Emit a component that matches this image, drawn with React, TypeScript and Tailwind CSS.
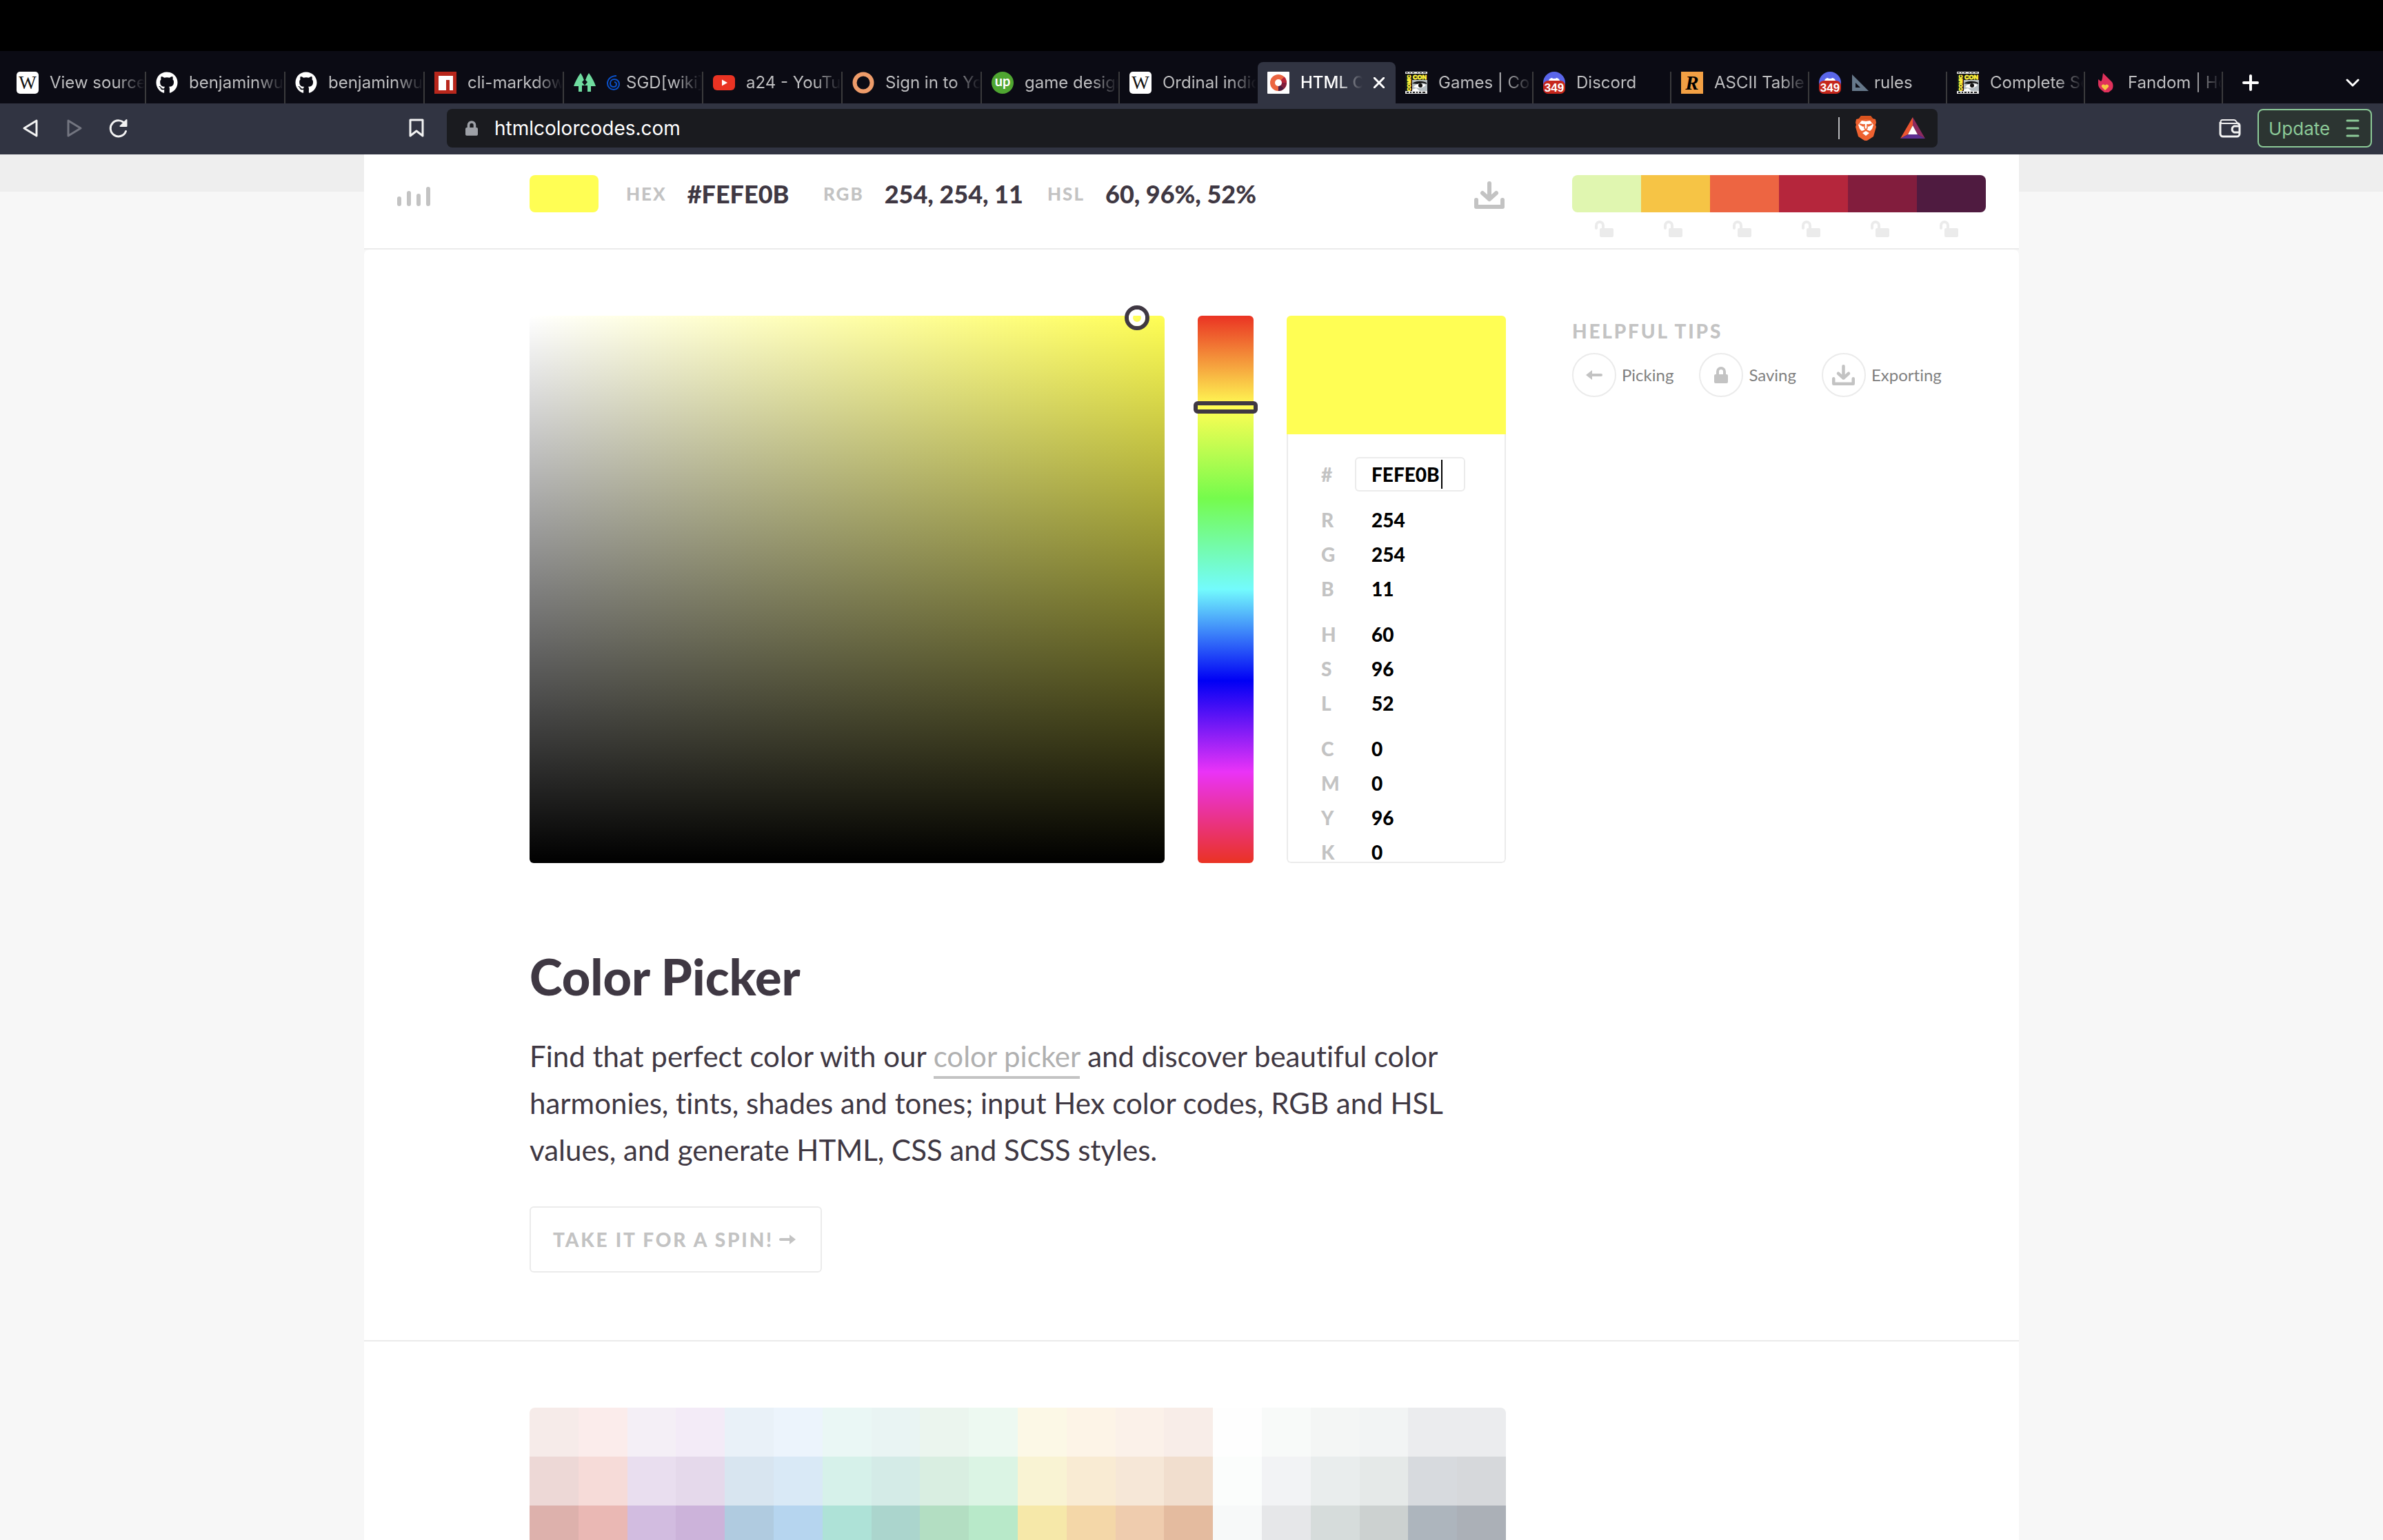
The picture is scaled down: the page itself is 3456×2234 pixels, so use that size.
import React from "react";
import { FaGithub } from "react-icons/fa";

const Wiki = () => (
  <svg viewBox="0 0 32 32" className="size-8">
    <rect width="32" height="32" rx="5" fill="#fff" />
    <text x="16" y="25" textAnchor="middle" fontSize="27" fontFamily="Liberation Serif, serif" fill="#111">W</text>
  </svg>
);
const Npm = () => (
  <svg viewBox="0 0 32 32" className="size-8">
    <rect width="32" height="32" fill="#b8271c" />
    <path d="M6 6h21v21h-5V12h-5v15H6z" fill="#fff" />
  </svg>
);
const Trees = () => (
  <svg viewBox="0 0 32 32" className="size-8">
    <path d="M10 2c3 4 4 8 5 10l-3 3 4 5h-4v9H7v-8H0c2-6 5-12 10-19zM22 2c5 7 8 13 10 19h-7v8h-5v-9h-4l4-5-3-3c1-2 2-6 5-10z" fill="#6fdc9f" />
  </svg>
);
const YouTube = () => (
  <svg viewBox="0 0 32 32" className="size-8">
    <rect y="5" width="32" height="22" rx="6" fill="#ea3323" />
    <path d="M13 11.500v9l8-4.500z" fill="#fff" />
  </svg>
);
const Ring = () => (
  <svg viewBox="0 0 32 32" className="size-8">
    <circle cx="16" cy="16" r="12.500" fill="none" stroke="#ee9c6a" strokeWidth="6" />
  </svg>
);
const Upwork = () => (
  <svg viewBox="0 0 32 32" className="size-8">
    <circle cx="16" cy="16" r="16" fill="#4fa631" />
    <text x="16" y="21" textAnchor="middle" fontSize="20" fontWeight="700" fontFamily="Lato, sans-serif" fill="#fff">up</text>
  </svg>
);
const ColorWheel = () => (
  <svg viewBox="0 0 32 32" className="size-8">
    <rect width="32" height="32" rx="1" fill="#fff" />
    <circle cx="16" cy="16" r="12" fill="#eb6541" />
    <path d="M16 16 24.500 7.500A12 12 0 0 1 28 16z" fill="#b5263b" />
    <path d="M16 16h12a12 12 0 0 1-3.500 8.500z" fill="#821d3d" />
    <path d="M16 16l8.500 8.500A12 12 0 0 1 16 28z" fill="#4f1b40" />
    <circle cx="16" cy="16" r="5" fill="#fff" />
  </svg>
);
const ComicCon = () => (
  <svg viewBox="0 0 32 32" className="size-8">
    <rect width="32" height="32" fill="#b4bcc0" />
    <path d="M0 0h32v3H0z" fill="#e8e8e8" />
    <path d="M1 1h3v1H1zM6 1h2v1H6zM10 1h3v1h-3zM17 1h2v1h-2zM21 1h3v1h-3zM26 1h4v1h-4z" fill="#222" />
    <path d="M0 3h32v9H10v16H0z" fill="#151515" />
    <text x="21" y="11" textAnchor="middle" fontSize="9" fontWeight="700" fontFamily="Liberation Sans, sans-serif" fill="#fff23a" stroke="#fff23a" strokeWidth="0.800">CON</text>
    <text transform="translate(8 28) rotate(-90)" fontSize="7" fontWeight="700" fontFamily="Liberation Sans, sans-serif" fill="#fff23a" stroke="#fff23a" strokeWidth="0.800">COMIC</text>
    <path d="M10 17c6-4 14-4 21-1v2c-5-2-9-2-12 0z" fill="#111" />
    <path d="M12 22c4-5 10-6 18-3-3 5-11 6-18 3z" fill="#fff" />
    <circle cx="22" cy="20" r="3" fill="#111" />
    <path d="M10 26l6-2 5 4H10z" fill="#fff" />
    <path d="M0 28h32v4H0z" fill="#e8e8e8" />
    <path d="M2 29h3v2H2zM7 29h2v2H7zM11 29h3v2h-3zM16 29h2v2h-2zM20 29h3v2h-3zM25 29h4v2h-4z" fill="#222" />
  </svg>
);
const Discord = () => (
  <svg viewBox="0 0 32 32" className="size-8">
    <circle cx="16" cy="16" r="16" fill="#5a66ea" />
    <path d="M8 13c1-3 3-4 5-4l1 1h4l1-1c2 0 4 1 5 4z" fill="#fff" />
    <rect y="13" width="32" height="19" rx="7" fill="#c6271c" />
    <text x="16" y="29" textAnchor="middle" fontSize="17" fontWeight="700" fontFamily="Liberation Sans, sans-serif" fill="#fff">349</text>
  </svg>
);
const Rapid = () => (
  <svg viewBox="0 0 32 32" className="size-8">
    <rect width="32" height="32" fill="#f3a044" />
    <text x="16" y="26" textAnchor="middle" fontSize="29" fontWeight="700" fontStyle="italic" fontFamily="Liberation Serif, serif" fill="#000">R</text>
  </svg>
);
const Flame = () => (
  <svg viewBox="0 0 32 32" className="size-8">
    <path d="M12 2l13 13c2 3 2 8 0 11l-5 4h-6l-5-4c-3-3-4-5-4-8v-7l4 3c2-2 2-6 3-12z" fill="#e0315b" />
    <path d="M15 27l-5-5c-1-3 3-5 5-2 2-3 6-1 5 2z" fill="#f7c743" />
  </svg>
);
const Cyclone = () => (
  <svg viewBox="0 0 20 24" className="h-6 w-5 shrink-0">
    <path d="M14 2C6 2 1 7 1 13c0 5 4 9 9 9s8-4 8-8-3-7-7-7-6 3-6 6 2 5 5 5 4-2 4-4-2-3-3-3" fill="none" stroke="#0a50c8" strokeWidth="2" />
  </svg>
);
const SetSquare = () => (
  <svg viewBox="0 0 24 24" className="size-6 shrink-0">
    <path fillRule="evenodd" d="M0 0l24 24H0zM5 12v7h7z" fill="#66788a" />
  </svg>
);

const Download = ({ className }: { className: string }) => (
  <svg viewBox="0 0 44 40" className={className}>
    <path d="M22 3v22M12 17l10 9 10-9" fill="none" stroke="#c3c3c3" strokeWidth="6" strokeLinecap="round" strokeLinejoin="round" />
    <path d="M3 27v10h38V27" fill="none" stroke="#c3c3c3" strokeWidth="6" strokeLinecap="round" strokeLinejoin="round" />
  </svg>
);
const OpenLock = () => (
  <svg viewBox="0 0 28 24" className="h-6 w-7">
    <path d="M2 11V7a5 5 0 0 1 10 0v5" fill="none" stroke="#ebebeb" strokeWidth="4" strokeLinecap="round" />
    <rect x="7" y="11" width="20" height="13" rx="2" fill="#ebebeb" />
  </svg>
);
const ClosedLock = ({ className }: { className: string }) => (
  <svg viewBox="0 0 20 24" className={className} fill="currentColor">
    <path d="M5 12V7a5 5 0 0 1 10 0v5" fill="none" stroke="currentColor" strokeWidth="4" />
    <rect y="11" width="20" height="13" rx="2" />
  </svg>
);

type Tab = { icon: React.ReactNode; label: string; mark?: React.ReactNode; active?: boolean; wide?: boolean; line?: boolean };
const tabs: Tab[] = [
  { icon: <Wiki />, label: "View source", wide: true, line: true },
  { icon: <FaGithub className="size-8 text-white" />, label: "benjaminwu", wide: true, line: true },
  { icon: <FaGithub className="size-8 text-white" />, label: "benjaminwu", wide: true, line: true },
  { icon: <Npm />, label: "cli-markdown", wide: true, line: true },
  { icon: <Trees />, label: "SGD[wiki]", mark: <Cyclone />, wide: true, line: true },
  { icon: <YouTube />, label: "a24 - YouTube", wide: true, line: true },
  { icon: <Ring />, label: "Sign in to Your", wide: true, line: true },
  { icon: <Upwork />, label: "game design", line: true },
  { icon: <Wiki />, label: "Ordinal indicator" },
  { icon: <ColorWheel />, label: "HTML Color", active: true },
  { icon: <ComicCon />, label: "Games | Comic", line: true },
  { icon: <Discord />, label: "Discord", line: true },
  { icon: <Rapid />, label: "ASCII Table", line: true },
  { icon: <Discord />, label: "rules", mark: <SetSquare />, line: true },
  { icon: <ComicCon />, label: "Complete Sets", line: true },
  { icon: <Flame />, label: "Fandom | Home", line: true },
];

function TabStrip() {
  return (
    <div className="flex h-[76px] items-end bg-[#0b0b14] pl-[10px]">
      {tabs.map((t, i) => (
        <div
          key={i}
          className={`flex h-[60px] min-w-0 items-end ${t.wide ? "w-[202px]" : "w-[200px]"} ${t.active ? "rounded-t-lg bg-[#313442]" : ""}`}
        >
          <button className="flex h-[60px] min-w-0 flex-1 items-center gap-4 pl-[14px] text-left">
            <span className="shrink-0">{t.icon}</span>
            <span
              className={`flex min-w-0 flex-1 items-center gap-2 overflow-hidden whitespace-nowrap text-[24px] leading-8 ${t.active ? "font-medium text-white" : "text-[#bebec0]"} [mask-image:linear-gradient(to_right,black_calc(100%-40px),transparent)]`}
            >
              {t.mark}
              {t.label}
            </span>
          </button>
          {t.active ? (
            <button aria-label="Close tab" className="flex h-[60px] w-12 items-center justify-center">
              <svg viewBox="0 0 16 16" className="size-4">
                <path d="M1 1l14 14M15 1 1 15" stroke="#fff" strokeWidth="3" strokeLinecap="round" />
              </svg>
            </button>
          ) : (
            <span className={`h-[46px] w-[2px] ${t.line ? "bg-[#3a3a3c]" : ""}`} />
          )}
        </div>
      ))}
      <button aria-label="New tab" className="ml-7 flex h-[60px] items-center">
        <svg viewBox="0 0 24 24" className="size-6">
          <path d="M12 2v20M2 12h20" stroke="#fff" strokeWidth="4" strokeLinecap="round" />
        </svg>
      </button>
      <button aria-label="Search tabs" className="mr-[34px] ml-auto flex h-[60px] items-center">
        <svg viewBox="0 0 20 12" className="h-3 w-5">
          <path d="M2 2l8 8 8-8" fill="none" stroke="#fff" strokeWidth="3" strokeLinecap="round" strokeLinejoin="round" />
        </svg>
      </button>
    </div>
  );
}

function Toolbar() {
  return (
    <div className="flex h-[74px] items-center bg-[#313442] pt-2 pr-4 pb-[10px] pl-8">
      <div className="flex w-[616px] items-center">
        <button aria-label="Back">
          <svg viewBox="0 0 24 28" className="h-7 w-6"><path d="M21 3v22L3 14z" fill="none" stroke="#f2f2f2" strokeWidth="3" strokeLinejoin="round" /></svg>
        </button>
        <button aria-label="Forward" className="ml-10">
          <svg viewBox="0 0 24 28" className="h-7 w-6"><path d="M3 3v22l18-11z" fill="none" stroke="#737580" strokeWidth="3" strokeLinejoin="round" /></svg>
        </button>
        <button aria-label="Reload" className="ml-[38px]">
          <svg viewBox="0 0 28 28" className="size-7">
            <path d="M24.500 18.500A11.500 11.500 0 1 1 23 7.500" fill="none" stroke="#f2f2f2" strokeWidth="3" strokeLinecap="round" />
            <path d="M25.500 2v9h-9z" fill="#f2f2f2" stroke="#f2f2f2" strokeWidth="2" strokeLinejoin="round" />
          </svg>
        </button>
        <button aria-label="Bookmark" className="mr-[33px] ml-auto">
          <svg viewBox="0 0 22 28" className="h-7 w-[22px]"><path d="M2 2h18v23l-9-7-9 7z" fill="none" stroke="#f2f2f2" strokeWidth="3" strokeLinejoin="round" /></svg>
        </button>
      </div>
      <div className="flex h-14 flex-1 items-center rounded-lg bg-[#1a1b1f] pr-[18px] pl-[27px]">
        <ClosedLock className="h-[22px] w-[18px] text-[#9da0a6]" />
        <input aria-label="Address" defaultValue="htmlcolorcodes.com" className="ml-6 min-w-0 flex-1 bg-transparent text-[28px] text-white outline-none" />
        <span className="h-8 w-[2px] bg-[#b9b9bc]" />
        <button aria-label="Brave Shields" className="ml-[22px]">
          <svg viewBox="0 0 32 36" className="h-9 w-8">
            <path d="M9 0h14l3 4 4 1 1 5-1 3 1 3-4 14-6 4-5 3-5-3-6-4L1 16l1-3-1-3 1-5 4-1z" fill="#ee6230" />
            <path d="M9 0h14l4 5-5 1-6-1-6 1-5-1z" fill="#d9541f" />
            <path d="M10 7l6 1 6-1 5 6-2 6-3 3-3-1-3-2-3 2-3 1-3-3-2-6z" fill="#fff" />
            <path d="M7 12l6 1-1 2zM25 12l-6 1 1 2zM14 12v6l2 2 2-2v-6" fill="none" stroke="#ee6230" strokeWidth="1.500" />
            <path d="M16 22l5 3-5 4-5-4z" fill="#fff" />
          </svg>
        </button>
        <button aria-label="Brave Rewards" className="ml-[34px]">
          <svg viewBox="0 0 36 32" className="h-8 w-9">
            <path d="M18 0v12L11 25 0 31z" fill="#ec5531" />
            <path d="M18 0l18 31-11-6-7-13z" fill="#8d2a5f" />
            <path d="M0 31l11-6h14l11 6z" fill="#5d2f91" />
            <path d="M18 12l7 13H11z" fill="#fff" />
          </svg>
        </button>
      </div>
      <div className="flex w-[630px] items-center justify-end gap-6">
        <button aria-label="Wallet">
          <svg viewBox="0 0 32 28" className="h-7 w-8" fill="none" stroke="#f2f2f2" strokeWidth="3" strokeLinejoin="round">
            <path d="M2 5v17a4 4 0 0 0 4 4h20a4 4 0 0 0 4-4V10a3 3 0 0 0-3-3" />
            <path d="M28 8l-3-4a4 4 0 0 0-3-2H5a2 2 0 0 0 0 5h23" strokeWidth="2" />
            <path d="M30 11H22a5 5 0 0 0 0 9h8" />
          </svg>
        </button>
        <button className="flex h-14 w-[166px] items-center justify-between rounded-lg border-2 border-[#8cca98] bg-[#2c3532] pr-4 pl-[14px] text-[26px] text-[#8cca98]">
          Update
          <svg viewBox="0 0 20 26" className="h-[26px] w-5"><path d="M2 2h16M2 13h16M2 24h16" stroke="#8cca98" strokeWidth="3" strokeLinecap="round" /></svg>
        </button>
      </div>
    </div>
  );
}

const readouts = [
  ["HEX", "#FEFE0B", "w-[286px]"],
  ["RGB", "254, 254, 11", "w-[325px]"],
  ["HSL", "60, 96%, 52%", ""],
];
const palette = ["bg-[#e0f6b0]", "bg-[#f6c445]", "bg-[#ed6542]", "bg-[#b5263c]", "bg-[#821d3d]", "bg-[#4f1b40]"];

function ColorBar() {
  return (
    <header className="bg-[linear-gradient(#eeeeee_54px,#f7f7f7_54px)]">
      <div className="mx-auto flex h-[138px] w-full max-w-[2400px] border-b-2 border-[#ebebeb] bg-white px-12 pt-[30px]">
        <button aria-label="Statistics" className="flex h-[54px] w-48 items-center pt-2">
          <svg viewBox="0 0 48 28" className="h-7 w-12">
            <path d="M3 17v8M17 9v16M31 13v12M45 3v22" stroke="#c3c3c3" strokeWidth="6" strokeLinecap="round" />
          </svg>
        </button>
        <div className="flex h-[54px] min-w-0 flex-1 items-center">
          <div className="h-[54px] w-[100px] rounded-lg bg-[#fffe54]" />
          <dl className="ml-10 flex">
            {readouts.map(([k, v, w]) => (
              <div key={k} className={`flex items-center gap-[30px] whitespace-nowrap ${w}`}>
                <dt className="text-[26px] font-black tracking-[2px] text-[#c3c3c3]">{k}</dt>
                <dd className="text-[36px] font-black text-[#3f3843]">{v}</dd>
              </div>
            ))}
          </dl>
          <button aria-label="Export" className="mr-[2px] ml-auto pt-1">
            <Download className="h-10 w-11" />
          </button>
        </div>
        <div className="ml-24 w-[600px]">
          <div className="flex h-[54px] overflow-hidden rounded-lg">
            {palette.map((c) => <button key={c} aria-label="Palette colour" className={`flex-1 ${c}`} />)}
          </div>
          <div className="mt-3 flex">
            {palette.map((c) => (
              <button key={c} aria-label="Lock colour" className="flex flex-1 justify-center pr-1.5"><OpenLock /></button>
            ))}
          </div>
        </div>
      </div>
    </header>
  );
}

const groups = [
  [["R", "254"], ["G", "254"], ["B", "11"]],
  [["H", "60"], ["S", "96"], ["L", "52"]],
  [["C", "0"], ["M", "0"], ["Y", "96"], ["K", "0"]],
];

function Picker() {
  return (
    <div className="flex h-[794px] gap-12">
      <div className="relative min-w-0 flex-1 rounded-md bg-[linear-gradient(to_top,#000,transparent),linear-gradient(to_right,#fff,#fffe54)]">
        <div className="absolute -top-[15px] right-[22px] size-9 rounded-full border-6 border-[#3f3843]">
          <div className="size-6 rounded-full border-6 border-white" />
        </div>
      </div>
      <div className="relative w-[81px] rounded-md bg-[linear-gradient(#ea3323,#fffd54,#75fb4c,#73fbfd,#0000f5,#ea33f7,#ea3323)]">
        <input type="range" aria-label="Hue" min="0" max="360" defaultValue="60" className="absolute inset-0 size-full opacity-0" />
        <div className="pointer-events-none absolute -inset-x-[6px] top-[124px] h-[18px] rounded-md border-6 border-[#3f3843]" />
      </div>
      <form className="flex w-[318px] flex-col overflow-hidden rounded-md">
        <div className="h-[172px] shrink-0 bg-[#fffe54]" />
        <div className="min-h-0 flex-1 overflow-hidden rounded-b-md border-x-2 border-b-2 border-[#ebebeb] px-12 pt-[33px] text-[28px] font-black text-black">
          <label className="flex h-[50px] items-center">
            <span className="w-[49px] text-[#c3c3c3]">#</span>
            <span className="relative flex">
              <input defaultValue="FEFE0B" className="h-[50px] w-[160px] rounded-md border-2 border-[#ebebeb] pl-[22px] outline-none" />
              <span className="absolute top-1 left-[125px] h-[42px] w-[2px] bg-black" />
            </span>
          </label>
          {groups.map((g) => (
            <div key={g[0][0]} className="mt-4">
              {g.map(([k, v]) => (
                <label key={k} className="flex h-[50px] items-center">
                  <span className="w-[49px] text-[#c3c3c3]">{k}</span>
                  <input defaultValue={v} className="h-[50px] w-[160px] bg-transparent pl-6 outline-none" />
                </label>
              ))}
            </div>
          ))}
        </div>
      </form>
    </div>
  );
}

const swatches = [
  ["bg-[#f6ebe9]", "bg-[#fbeceb]", "bg-[#f4eff6]", "bg-[#f3ebf7]", "bg-[#e9f1f8]", "bg-[#ecf4fc]", "bg-[#eaf7f5]", "bg-[#e9f4f3]", "bg-[#ebf5ee]", "bg-[#edf9f1]", "bg-[#fcf8e6]", "bg-[#fdf4e7]", "bg-[#fbf1e9]", "bg-[#f8ede8]", "bg-[#fefefe]", "bg-[#f8faf9]", "bg-[#f4f6f5]", "bg-[#f2f4f4]", "bg-[#ebecee]", "bg-[#ebecee]"],
  ["bg-[#edd8d6]", "bg-[#f6dbd8]", "bg-[#e9deef]", "bg-[#e5d9eb]", "bg-[#d8e5f0]", "bg-[#d9e9f6]", "bg-[#d6f1ea]", "bg-[#d4ebe7]", "bg-[#d9eee1]", "bg-[#dbf4e4]", "bg-[#f9f3d3]", "bg-[#f9ebd3]", "bg-[#f6e7d7]", "bg-[#f1dece]", "bg-[#fbfdfc]", "bg-[#f2f3f5]", "bg-[#e9eded]", "bg-[#e5e9e8]", "bg-[#d7dade]", "bg-[#d6d8db]"],
  ["bg-[#ddb1ac]", "bg-[#eab8b4]", "bg-[#d2bce0]", "bg-[#ccb3da]", "bg-[#b0cbe0]", "bg-[#b6d5ef]", "bg-[#aee2d7]", "bg-[#abd5cd]", "bg-[#b3dec2]", "bg-[#b8e9c9]", "bg-[#f6e8a9]", "bg-[#f4d7a8]", "bg-[#efccae]", "bg-[#e4bb9f]", "bg-[#f7f9f9]", "bg-[#e6e7e9]", "bg-[#d6dcdb]", "bg-[#ccd1d0]", "bg-[#adb5bd]", "bg-[#abb0b7]"],
];

const tips = [
  ["Picking", <svg key="p" viewBox="0 0 24 14" className="h-[14px] w-6"><path d="M0 7l9-7v14z" fill="#c3c3c3" /><path d="M6 7h16" stroke="#c3c3c3" strokeWidth="4" strokeLinecap="round" /></svg>],
  ["Saving", <ClosedLock key="s" className="h-6 w-5 text-[#c3c3c3]" />],
  ["Exporting", <Download key="e" className="h-[30px] w-[33px]" />],
] as const;

export default function App() {
  return (
    <div className="flex h-screen flex-col overflow-hidden bg-[#f7f7f7] font-[Inter,sans-serif]">
      <div className="h-[74px] shrink-0 bg-black" />
      <TabStrip />
      <Toolbar />
      <div className="min-h-0 flex-1 overflow-hidden font-[Lato,sans-serif] [font-variant-ligatures:none]">
        <ColorBar />
        <main className="mx-auto min-h-full w-full max-w-[2400px] rounded-t-lg bg-white">
          <section className="flex gap-24 border-b-2 border-[#ebebeb] pt-24 pr-12 pb-[98px] pl-60">
            <div className="min-w-0 flex-1">
              <Picker />
              <h1 className="mt-[124px] text-[72px] leading-20 font-black text-[#3f3843]">Color Picker</h1>
              <p className="mt-[42px] text-[42px] leading-[68px] text-[#3f3843]">
                Find that perfect color with our{" "}
                <a href="#picker" className="border-b-4 border-[#c3c3c3] pb-1 text-[#b0b0b0]">color picker</a> and discover beautiful color
                harmonies, tints, shades and tones; input Hex color codes, RGB and HSL values, and generate HTML, CSS and SCSS styles.
              </p>
              <a href="#spin" className="mt-12 inline-flex h-24 items-center gap-2 rounded-md border-2 border-[#ebebeb] pr-9 pl-8 text-[28px] font-black tracking-widest text-[#c3c3c3]">
                TAKE IT FOR A SPIN!
                <svg viewBox="0 0 24 14" className="h-[14px] w-6"><path d="M24 7l-9-7v14z" fill="#c3c3c3" /><path d="M2 7h16" stroke="#c3c3c3" strokeWidth="4" strokeLinecap="round" /></svg>
              </a>
            </div>
            <aside className="w-[600px]">
              <h2 className="mt-1 text-[28px] leading-9 font-black tracking-widest text-[#c3c3c3]">HELPFUL TIPS</h2>
              <div className="mt-[14px] flex gap-[37px]">
                {tips.map(([label, icon]) => (
                  <a key={label} href="#tips" className="flex items-center gap-2 text-[24px] text-[#808080]">
                    <span className="flex size-16 items-center justify-center rounded-full border-2 border-[#ebebeb]">{icon}</span>
                    {label}
                  </a>
                ))}
              </div>
            </aside>
          </section>
          <section className="pt-24 pr-[744px] pl-60">
            <div className="overflow-hidden rounded-t-lg">
              {swatches.map((row, r) => (
                <div key={r} className="flex h-[71px]">
                  {row.map((c, i) => <div key={i} className={`flex-1 ${c}`} />)}
                </div>
              ))}
            </div>
          </section>
        </main>
      </div>
    </div>
  );
}
